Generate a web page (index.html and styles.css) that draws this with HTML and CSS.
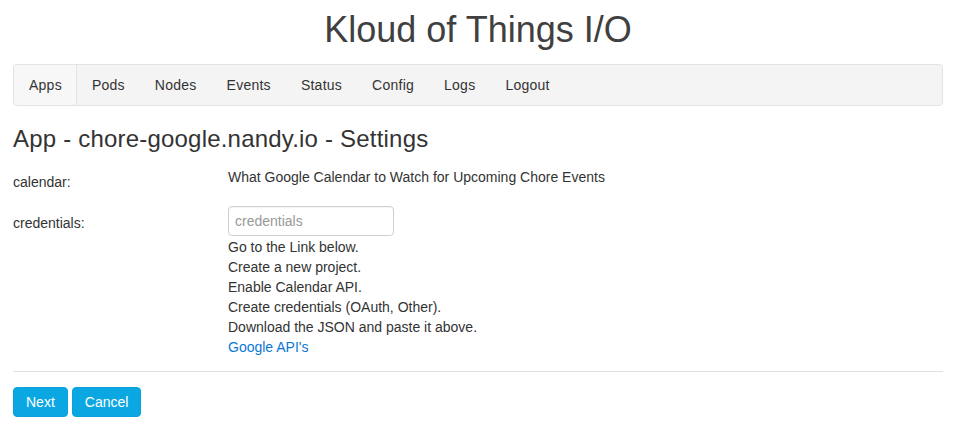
FILE: index.html
```html
<!DOCTYPE html>
<html lang="en">
<head>
<meta charset="utf-8">
<title>Kloud of Things I/O</title>
<link rel="stylesheet" href="styles.css">
</head>
<body>
<div class="container">
  <h1 class="site-title">Kloud of Things I/O</h1>
  <nav class="navbar">
    <ul class="nav">
      <li class="nav-item active"><a href="#">Apps</a></li>
      <li class="nav-item"><a href="#">Pods</a></li>
      <li class="nav-item"><a href="#">Nodes</a></li>
      <li class="nav-item"><a href="#">Events</a></li>
      <li class="nav-item"><a href="#">Status</a></li>
      <li class="nav-item"><a href="#">Config</a></li>
      <li class="nav-item"><a href="#">Logs</a></li>
      <li class="nav-item"><a href="#">Logout</a></li>
    </ul>
  </nav>
  <h2 class="page-title">App - chore-google.nandy.io - Settings</h2>
  <form class="settings">
    <div class="field field-first">
      <label class="field-label">calendar:</label>
      <div class="field-control">
        <p class="field-desc">What Google Calendar to Watch for Upcoming Chore Events</p>
      </div>
    </div>
    <div class="field">
      <label class="field-label" for="credentials">credentials:</label>
      <div class="field-control">
        <input class="text-input" id="credentials" type="text" placeholder="credentials">
        <div class="help">
          <div>Go to the Link below.</div>
          <div>Create a new project.</div>
          <div>Enable Calendar API.</div>
          <div>Create credentials (OAuth, Other).</div>
          <div>Download the JSON and paste it above.</div>
          <div><a class="link" href="#">Google API's</a></div>
        </div>
      </div>
    </div>
    <hr class="divider">
    <div class="actions">
      <button type="button" class="btn">Next</button>
      <button type="button" class="btn">Cancel</button>
    </div>
  </form>
</div>
</body>
</html>
```

FILE: styles.css
```css
* { box-sizing: border-box; }

body {
  margin: 0;
  font-family: "Liberation Sans", Arial, Helvetica, sans-serif;
  font-size: 14px;
  line-height: 20px;
  color: #333;
  background: #fff;
}

.container {
  margin: 0 15px 0 13px;
}

.site-title {
  margin: 10px 0 14px;
  font-size: 36px;
  line-height: 40px;
  font-weight: normal;
  text-align: center;
  color: #404040;
}

.navbar {
  background: #f4f4f4;
  border: 1px solid #e3e3e3;
  border-radius: 4px;
  height: 42px;
}

.nav {
  list-style: none;
  margin: 0;
  padding: 0;
  display: flex;
  height: 40px;
}

.nav-item a {
  display: block;
  padding: 10px 15px;
  line-height: 20px;
  color: #333;
  text-decoration: none;
  letter-spacing: 0.25px;
}

.nav-item.active a {
  background: #f7f7f7;
  border-right: 1px solid #e3e3e3;
  border-radius: 4px 0 0 4px;
  padding-right: 14px;
}

.page-title {
  margin: 20px 0 13px;
  font-size: 24px;
  line-height: 26px;
  font-weight: normal;
  color: #333;
  letter-spacing: 0.2px;
}

.field {
  display: grid;
  grid-template-columns: 215px 1fr;
  margin-bottom: 12px;
}

.field-first {
  margin-bottom: 14px;
}

.field-label {
  padding-top: 7px;
  font-weight: normal;
}

.field-desc {
  margin: 2px 0 0;
}

.text-input {
  display: block;
  width: 166px;
  height: 30px;
  padding: 4px 6px;
  border: 1px solid #d0d0d0;
  border-radius: 4px;
  font-family: inherit;
  font-size: 14px;
  line-height: 20px;
  color: #333;
  background: #fff;
  box-shadow: inset 0 1px 1px rgba(0,0,0,0.04);
}

.text-input::placeholder {
  color: #999;
}

.help {
  margin-top: 1px;
  color: #333;
}

.link {
  color: #0b78d4;
  text-decoration: none;
}

.divider {
  margin: 14px 0 15px;
  border: 0;
  border-top: 1px solid #e0e0e0;
  height: 0;
}

.actions {
  display: flex;
  gap: 4px;
}

.btn {
  height: 30px;
  padding: 4px 12px;
  border: 1px solid #08a3dc;
  border-radius: 4px;
  background: #0ba7e2;
  color: #fff;
  font-family: inherit;
  font-size: 14px;
  line-height: 20px;
  cursor: pointer;
}
```
